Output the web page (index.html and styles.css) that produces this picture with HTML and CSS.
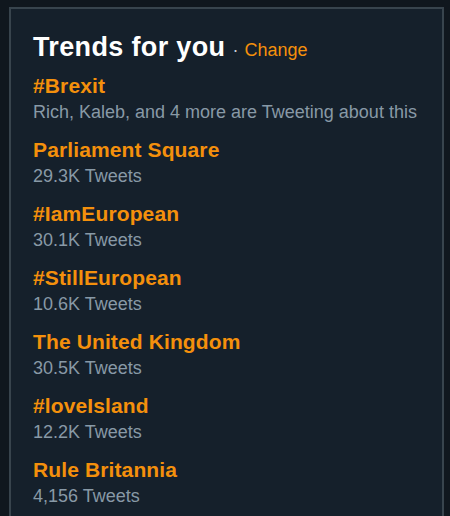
FILE: index.html
```html
<!DOCTYPE html>
<html>
<head>
<meta charset="utf-8">
<link rel="stylesheet" href="styles.css">
</head>
<body>
<section class="card">
  <header class="head">
    <h2 class="title">Trends for you</h2>
    <span class="dot">·</span>
    <a class="change">Change</a>
  </header>
  <ul class="list">
    <li class="item"><div class="name">#Brexit</div><div class="meta">Rich, Kaleb, and 4 more are Tweeting about this</div></li>
    <li class="item"><div class="name">Parliament Square</div><div class="meta">29.3K Tweets</div></li>
    <li class="item"><div class="name">#IamEuropean</div><div class="meta">30.1K Tweets</div></li>
    <li class="item"><div class="name">#StillEuropean</div><div class="meta">10.6K Tweets</div></li>
    <li class="item"><div class="name">The United Kingdom</div><div class="meta">30.5K Tweets</div></li>
    <li class="item"><div class="name">#loveIsland</div><div class="meta">12.2K Tweets</div></li>
    <li class="item"><div class="name">Rule Britannia</div><div class="meta">4,156 Tweets</div></li>
  </ul>
</section>
</body>
</html>
```
FILE: styles.css
```css
html, body {
  margin: 0;
  padding: 0;
  background: #10171e;
  font-family: "Liberation Sans", Arial, sans-serif;
}
body {
  padding: 7px 6px 0 9px;
  height: 516px;
  box-sizing: border-box;
  overflow: hidden;
}
.card {
  background: #15202b;
  border: 2px solid #38444d;
  border-bottom: none;
  padding: 22px 22px 0 22px;
  height: 520px;
  box-sizing: border-box;
}
.head {
  display: flex;
  align-items: baseline;
  margin-bottom: 11px;
}
.title {
  margin: 0;
  font-size: 27px;
  line-height: 32px;
  letter-spacing: 0.35px;
  font-weight: bold;
  color: #ffffff;
}
.dot {
  color: #c8d0d6;
  font-size: 18px;
  margin: 0 6px 0 7px;
}
.change {
  color: #f4900c;
  font-size: 18px;
}
.list {
  list-style: none;
  margin: 0;
  padding: 0;
  display: flex;
  flex-direction: column;
  gap: 14px;
}
.name {
  color: #f4900c;
  font-size: 21px;
  line-height: 24px;
  letter-spacing: 0.12px;
  font-weight: bold;
}
.meta {
  color: #8899a6;
  font-size: 18px;
  line-height: 24px;
  margin-top: 2px;
}
```
